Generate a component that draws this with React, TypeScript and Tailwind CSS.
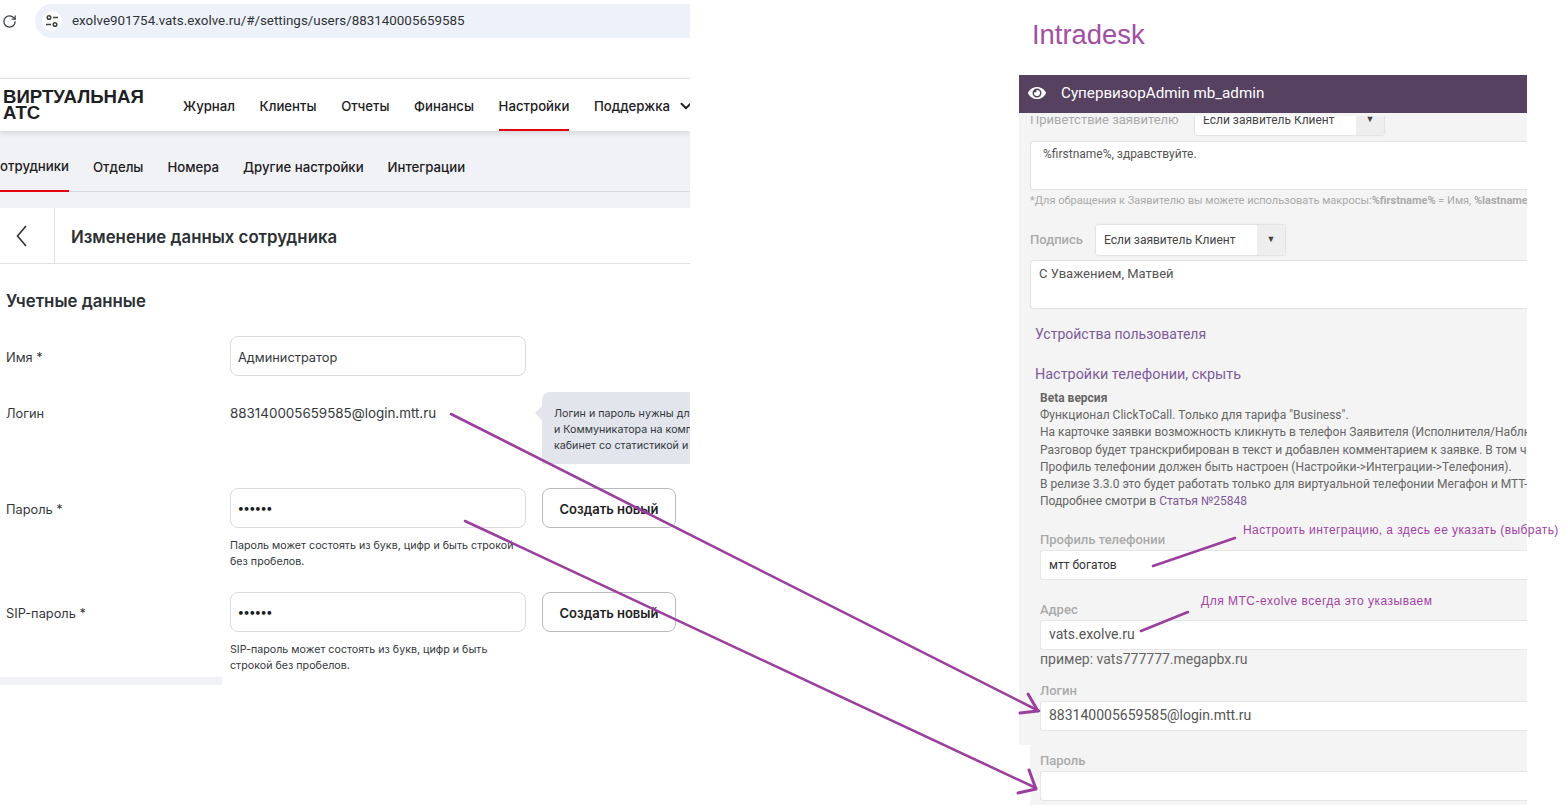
import type { ReactNode } from "react";
import { ChevronDown, RotateCw } from "lucide-react";
import { FaEye } from "react-icons/fa";

const ui = "font-['Inter','Roboto',sans-serif]";
const rb = "font-['Roboto',sans-serif]";

function TopNav() {
  const items = ["Журнал", "Клиенты", "Отчеты", "Финансы"];
  return (
    <div className="h-[53px] flex items-stretch bg-white border-t border-[#e0e0e0] shadow-[0_2px_6px_rgba(0,0,0,0.12)] relative">
      <div className="w-[183px] shrink-0 pl-[3px] flex items-center font-['Liberation_Sans',sans-serif] font-bold text-[18.6px] leading-[16px] text-[#1d2023]">
        <div>ВИРТУАЛЬНАЯ<br />АТС</div>
      </div>
      <div className="flex gap-[24.6px] text-[13.2px] font-medium text-[#1d2023] whitespace-nowrap">
        {items.map((t) => (
          <div key={t} className="flex items-center pt-[4px]">{t}</div>
        ))}
        <div className="flex items-center border-b-2 border-[#e30611] pt-[5px]">Настройки</div>
        <div className="flex items-center gap-[7px] pt-[4px]">Поддержка<ChevronDown className="shrink-0 -mt-[2px]" size={18} strokeWidth={2.5} /></div>
      </div>
    </div>
  );
}

function SubNav() {
  return (
    <div className="h-[61px] flex gap-[24px] bg-[#f1f2f5] border-b border-[#d8dade] text-[13.2px] font-medium text-[#1d2023] whitespace-nowrap">
      <div className="flex items-center pt-[13px] w-[69px] justify-end border-b-2 border-[#e30611] -mb-px overflow-hidden">
        <span>сотрудники</span>
      </div>
      {["Отделы", "Номера", "Другие настройки", "Интеграции"].map((t) => (
        <div key={t} className="flex items-center pt-[13px]">{t}</div>
      ))}
    </div>
  );
}

function Row({ label, children }: { label: string; children: ReactNode }) {
  return (
    <div className="flex">
      <div className="w-[230px] h-[40px] pl-[6px] flex items-center pt-[3px] text-[12.8px] text-[#34383d]">{label}</div>
      {children}
    </div>
  );
}

function Field({ value, dots }: { value?: string; dots?: boolean }) {
  return (
    <div className="w-[296px] h-[40px] rounded-[8px] border border-[#d9dbe0] bg-white flex items-center pl-[7px] pt-[3px] text-[12.8px] text-[#34383d]">
      {dots ? <span className="font-bold text-[12px] text-[#1d2023] -mt-[3px]">••••••</span> : value}
    </div>
  );
}

function NewButton() {
  return (
    <div className="ml-[16px] w-[134px] h-[40px] rounded-[8px] border border-[#b8bbc2] bg-white flex items-center justify-center pt-[3px] text-[13px] font-semibold text-[#1d2023]">
      Создать новый
    </div>
  );
}

function Hint({ children }: { children: ReactNode }) {
  return <div className="ml-[230px] mt-[10px] w-[290px] text-[10.7px] leading-[16px] text-[#34383d]">{children}</div>;
}

function LeftWindow() {
  return (
    <div className={`w-[690px] h-[685px] shrink-0 overflow-hidden bg-white ${ui}`}>
      <div className="h-[42px] pt-[4px] flex items-start">
        <div className="w-[35px] h-[34px] pl-[2px] flex items-center text-[#3c4043]">
          <RotateCw size={15} strokeWidth={2} />
        </div>
        <div className={`flex-1 h-[34px] rounded-l-full bg-[#edf2fa] flex items-center pl-[7px] gap-[10px] ${rb}`}>
          <div className="w-[20px] h-[20px] rounded-full bg-white flex items-center justify-center">
            <svg width="14" height="14" viewBox="0 0 14 14" fill="none" stroke="#3c4043" strokeWidth="1.5">
              <circle cx="4" cy="3.5" r="1.8" />
              <path d="M8 3.5h5M1 10.5h5" />
              <circle cx="10" cy="10.5" r="1.8" />
            </svg>
          </div>
          <span className="text-[13.4px] text-[#303337] whitespace-nowrap">exolve901754.vats.exolve.ru/#/settings/users/883140005659585</span>
        </div>
      </div>
      <div className="h-[36px]" />
      <TopNav />
      <SubNav />
      <div className="h-[16px] bg-[#f1f2f5]" />
      <div className="h-[56px] flex items-stretch border-b border-[#dfe1e5]">
        <div className="w-[55px] border-r border-[#dfe1e5] flex items-center pl-[16px] text-[#2c3035]">
          <svg width="11" height="22" viewBox="0 0 11 22" fill="none" stroke="currentColor" strokeWidth="1.6">
            <path d="M10 1 L1.5 11 L10 21" />
          </svg>
        </div>
        <div className="pl-[16px] pt-[5px] flex items-center text-[16.8px] font-semibold text-[#2c3035]">Изменение данных сотрудника</div>
      </div>
      <div className="pl-[6px] pt-[26px] text-[16.8px] leading-[22px] font-semibold text-[#2c3035]">Учетные данные</div>
      <div className="mt-[24px]">
        <Row label="Имя *"><Field value="Администратор" /></Row>
      </div>
      <div className="mt-[16px] flex h-[72px]">
        <div className="w-[230px] shrink-0 pl-[6px] text-[12.8px] leading-[44px] text-[#34383d]">Логин</div>
        <div className="w-[312px] shrink-0 text-[13.4px] leading-[43px] text-[#34383d]">883140005659585@login.mtt.ru</div>
        <div className="flex-1 relative bg-[#e2e5ec] rounded-tl-[8px] pl-[12px] pt-[14px] text-[10.7px] leading-[16px] text-[#34383d] whitespace-nowrap">
          <div className="absolute left-[-5px] top-[16px] w-[10px] h-[10px] rotate-45 bg-[#e2e5ec]" />
          <div className="relative overflow-hidden">
            Логин и пароль нужны для входа<br />и Коммуникатора на компьютере<br />кабинет со статистикой и записями
          </div>
        </div>
      </div>
      <div className="mt-[24px]">
        <Row label="Пароль *"><Field dots /><NewButton /></Row>
        <Hint>Пароль может состоять из букв, цифр и быть строкой без пробелов.</Hint>
      </div>
      <div className="mt-[22px]">
        <Row label="SIP-пароль *"><Field dots /><NewButton /></Row>
        <Hint>SIP-пароль может состоять из букв, цифр и быть строкой без пробелов.</Hint>
      </div>
      <div className="mt-[3px] w-[222px] h-[8px] bg-[#f1f2f5]" />
    </div>
  );
}

function Select() {
  return (
    <div className="w-[189px] h-[30px] bg-white rounded-[2px] shadow-[0_0_2px_rgba(0,0,0,0.25)] flex items-center pl-[8px] text-[12px] text-[#444] relative shrink-0">
      <span>Если заявитель Клиент</span>
      <div className="absolute right-0 top-0 bottom-0 w-[28px] bg-[#eeeeee] flex items-center justify-center text-[9px] text-[#444]">▼</div>
    </div>
  );
}

function TextBox({ pad, size, children }: { pad: string; size: string; children: ReactNode }) {
  return (
    <div className={`ml-[11px] h-[49px] bg-white border border-[#e3e3e3] border-r-0 rounded-l-[4px] pt-[4px] leading-[17px] text-[#555] ${pad} ${size}`}>
      {children}
    </div>
  );
}

function Labeled({ label, mt, ml = "ml-[21px]", children }: { label: string; mt: string; ml?: string; children: ReactNode }) {
  return (
    <div className={`${mt} ${ml}`}>
      <div className="text-[13px] leading-[16px] font-medium text-[#aaaaaa] translate-y-px">{label}</div>
      <div className="mt-[3px] h-[30px] bg-white border border-[#e6e6e6] border-r-0 rounded-l-[3px] flex items-center pl-[8px] pb-[1px] text-[#555]">
        {children}
      </div>
    </div>
  );
}

function RightWindow() {
  return (
    <div className={`ml-[329px] w-[508px] h-[810px] shrink-0 overflow-hidden bg-white ${rb}`}>
      <div className="h-[75px] pl-[13px] pt-[16px] font-['Liberation_Sans',sans-serif] text-[27.4px] leading-[38px] text-[#a24ea5]">Intradesk</div>
      <div className="h-[38px] bg-[#574161] flex items-center pl-[9px] pb-[2px] gap-[15px] text-white text-[15.2px] relative z-10">
        <FaEye size={18} />
        <span>СупервизорAdmin mb_admin</span>
      </div>
      <div className="h-[632px] bg-[#f4f4f4] overflow-hidden">
        <div className="mt-[3px] h-[21px] overflow-hidden">
          <div className="-mt-[11px] flex items-center ml-[11px] h-[30px]">
            <span className="text-[13px] text-[#aaaaaa] w-[165px] shrink-0">Приветствие заявителю</span>
            <Select />
          </div>
        </div>
        <div className="mt-[4px]"><TextBox pad="pl-[12px]" size="text-[12px]">%firstname%, здравствуйте.</TextBox></div>
        <div className="ml-[11px] mt-[3px] text-[11px] leading-[16px] text-[#aaaaaa] whitespace-nowrap">
          *Для обращения к Заявителю вы можете использовать макросы:<b>%firstname%</b> = Имя, <b>%lastname%</b>
        </div>
        <div className="mt-[16px] ml-[11px] flex items-center gap-[13px]">
          <span className="text-[13px] font-medium text-[#aaaaaa]">Подпись</span>
          <Select />
        </div>
        <div className="mt-[5px]"><TextBox pad="pl-[8px]" size="text-[13px]">С Уважением, Матвей</TextBox></div>
        <div className="mt-[15px] ml-[16px] text-[14px] leading-[20px] text-[#7d5a9a]">Устройства пользователя</div>
        <div className="mt-[21px] ml-[16px] text-[14.4px] leading-[20px] text-[#7d5a9a]">Настройки телефонии, скрыть</div>
        <div className="mt-[5px] ml-[21px] text-[12px] leading-[17.2px] text-[#666] whitespace-nowrap">
          <div className="font-bold">Beta версия</div>
          <div>Функционал ClickToCall. Только для тарифа "Business".</div>
          <div>На карточке заявки возможность кликнуть в телефон Заявителя (Исполнителя/Наблюдателя)</div>
          <div>Разговор будет транскрибирован в текст и добавлен комментарием к заявке. В том числе</div>
          <div>Профиль телефонии должен быть настроен (Настройки-&gt;Интеграции-&gt;Телефония).</div>
          <div>В релизе 3.3.0 это будет работать только для виртуальной телефонии Мегафон и МТТ-Exolve</div>
          <div>Подробнее смотри в <span className="text-[#7d5a9a]">Статья №25848</span></div>
        </div>
        <Labeled label="Профиль телефонии" mt="mt-[21px]"><span className="text-[12px] text-[#333]">мтт богатов</span></Labeled>
        <Labeled label="Адрес" mt="mt-[21px]"><span className="text-[14px]">vats.exolve.ru</span></Labeled>
        <div className="ml-[21px] text-[14px] leading-[18px] text-[#666]">пример: vats777777.megapbx.ru</div>
        <Labeled label="Логин" mt="mt-[14px]"><span className="text-[14px]">883140005659585@login.mtt.ru</span></Labeled>
      </div>
      <div className="ml-[11px] h-[60px] bg-[#f4f4f4] overflow-hidden">
        <Labeled label="Пароль" mt="mt-[7px]" ml="ml-[10px]"><span /></Labeled>
      </div>
    </div>
  );
}

function Annotations() {
  return (
    <div className="absolute inset-0 pointer-events-none">
      <svg width="1567" height="810" viewBox="0 0 1567 810" fill="none" stroke="#9b3f9e" strokeWidth="2.6" strokeLinecap="round" strokeLinejoin="round">
        <path d="M451 414 L1039 711" />
        <path d="M465 521 L1036 788" />
        <path strokeWidth="3" d="M1028 694 L1038 711 L1020 713" />
        <path strokeWidth="3" d="M1029 770 L1036 789 L1018 793" />
        <path d="M1235 538 L1153 566" />
        <path d="M1188 612 L1141 631" />
      </svg>
      <div className="absolute left-[1243px] top-[522px] font-['Liberation_Sans',sans-serif] text-[12px] leading-[16px] tracking-[0.41px] text-[#a23fa5] whitespace-nowrap">
        Настроить интеграцию, а здесь ее указать (выбрать)
      </div>
      <div className="absolute left-[1201px] top-[593px] font-['Liberation_Sans',sans-serif] text-[12px] leading-[16px] tracking-[0.5px] text-[#a23fa5] whitespace-nowrap">
        Для МТС-exolve всегда это указываем
      </div>
    </div>
  );
}

export default function App() {
  return (
    <div className="relative w-[1567px] h-[810px] overflow-hidden bg-white flex items-start">
      <LeftWindow />
      <RightWindow />
      <Annotations />
    </div>
  );
}
